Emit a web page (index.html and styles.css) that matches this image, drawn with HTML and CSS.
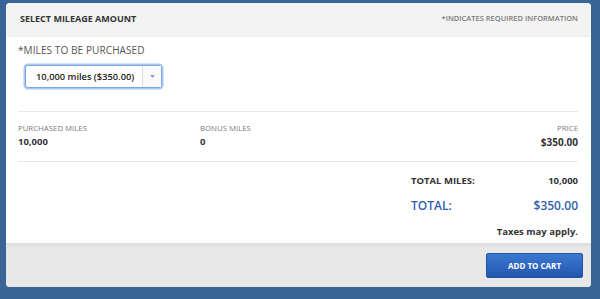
FILE: index.html
```html
<!DOCTYPE html>
<html lang="en">
<head>
  <meta charset="UTF-8" />
  <meta name="viewport" content="width=device-width, initial-scale=1.0" />
  <title>Buy Miles</title>
  <link rel="stylesheet" href="styles.css">
</head>
<body>
  <div class="panel">
    <div class="panel-header">
      <h2>Select Mileage Amount</h2>
      <span class="required-note">*Indicates required information</span>
    </div>

    <div class="panel-body">
      <label class="field-label" for="miles">*Miles to be purchased</label>
      <div class="select-box">
        <span class="select-value" id="miles">10,000 miles ($350.00)</span>
        <span class="select-arrow">
          <svg width="5" height="3" viewBox="0 0 5 3"><path d="M0 0h5L2.5 3z" fill="#8aa0c0"/></svg>
        </span>
      </div>

      <div class="summary">
        <div class="summary-col">
          <div class="summary-label">Purchased Miles</div>
          <div class="summary-value">10,000</div>
        </div>
        <div class="summary-col">
          <div class="summary-label">Bonus Miles</div>
          <div class="summary-value">0</div>
        </div>
        <div class="summary-col price">
          <div class="summary-label">Price</div>
          <div class="summary-value">$350.00</div>
        </div>
      </div>

      <div class="totals">
        <div class="total-row">
          <span>Total Miles:</span>
          <span>10,000</span>
        </div>
        <div class="total-row grand">
          <span>Total:</span>
          <span>$350.00</span>
        </div>
        <div class="taxes">Taxes may apply.</div>
      </div>
    </div>

    <div class="panel-footer">
      <button class="cart-button">Add to Cart</button>
    </div>
  </div>
</body>
</html>
```

FILE: styles.css
```css
body {
  font-family: "Open Sans", "Liberation Sans", sans-serif;
  background: #386496;
  margin: 0;
  padding: 3px 0 0 6px;
  color: #333;
}
.panel {
  width: 585px;
  height: 284px;
  background: #fff;
  border-radius: 4px;
  display: flex;
  flex-direction: column;
  overflow: hidden;
}
.panel-header {
  height: 32px;
  box-sizing: border-box;
  padding: 0 13px 2px 14px;
  background: #f3f3f3;
  display: flex;
  align-items: center;
  justify-content: space-between;
  box-shadow: 0 1px 3px rgba(0, 0, 0, 0.12);
  position: relative;
}
.panel-header h2 {
  margin: 0;
  font-size: 9px;
  font-weight: 700;
  text-transform: uppercase;
  color: #333;
}
.required-note {
  font-size: 7.5px;
  font-weight: 600;
  text-transform: uppercase;
  color: #7a7a7a;
}
.panel-body {
  flex: 1;
  padding: 8px 13px 0 12px;
}
.field-label {
  display: block;
  font-size: 10px;
  line-height: 14px;
  text-transform: uppercase;
  color: #555;
  letter-spacing: 0.1px;
}
.select-box {
  margin: 8px 0 0 7px;
  width: 137px;
  height: 23px;
  box-sizing: border-box;
  border: 1px solid #7aa7e6;
  box-shadow: 0 0 0 1.5px #a9c8f2;
  border-radius: 3px;
  display: flex;
  background: #fff;
}
.select-value {
  flex: 1;
  font-size: 9.3px;
  font-weight: 600;
  color: #222;
  display: flex;
  align-items: center;
  padding-left: 10px;
}
.select-arrow {
  width: 18px;
  border-left: 1px solid #ddd;
  display: flex;
  align-items: center;
  justify-content: center;
  background: #fafafa;
}
.summary {
  margin-top: 23px;
  border-top: 1px solid #e8e8e8;
  border-bottom: 1px solid #e8e8e8;
  display: flex;
  padding: 10px 0 12px;
}
.summary-col {
  width: 182px;
}
.summary-col.price {
  flex: 1;
  text-align: right;
}
.summary-label {
  font-size: 7.8px;
  line-height: 12px;
  text-transform: uppercase;
  color: #7a7a7a;
}
.summary-value {
  margin-top: 1px;
  font-size: 9.5px;
  line-height: 14px;
  font-weight: 700;
  color: #333;
}
.price .summary-value {
  font-size: 10px;
}
.totals {
  margin-left: 393px;
  padding-top: 12px;
}
.total-row {
  display: flex;
  justify-content: space-between;
  font-size: 9.5px;
  line-height: 14px;
  font-weight: 700;
  text-transform: uppercase;
  color: #333;
}
.total-row.grand {
  margin-top: 9px;
  font-size: 12px;
  line-height: 18px;
  font-weight: 600;
  color: #2f5fae;
}
.taxes {
  margin-top: 10px;
  text-align: right;
  font-size: 9.5px;
  line-height: 14px;
  font-weight: 700;
  color: #333;
}
.panel-footer {
  height: 44px;
  flex-shrink: 0;
  background: #e8e8e8;
  border-top: 1px solid #ddd;
  box-shadow: inset 0 2px 2px rgba(0, 0, 0, 0.04);
  display: flex;
  align-items: center;
  justify-content: flex-end;
  padding-right: 8px;
  box-sizing: border-box;
}
.cart-button {
  width: 97px;
  height: 25px;
  border: 1px solid #2453a3;
  border-radius: 2px;
  background: linear-gradient(#3b79d2, #2455ae);
  color: #fff;
  font-family: inherit;
  font-size: 8px;
  font-weight: 700;
  text-transform: uppercase;
  cursor: pointer;
}
```
